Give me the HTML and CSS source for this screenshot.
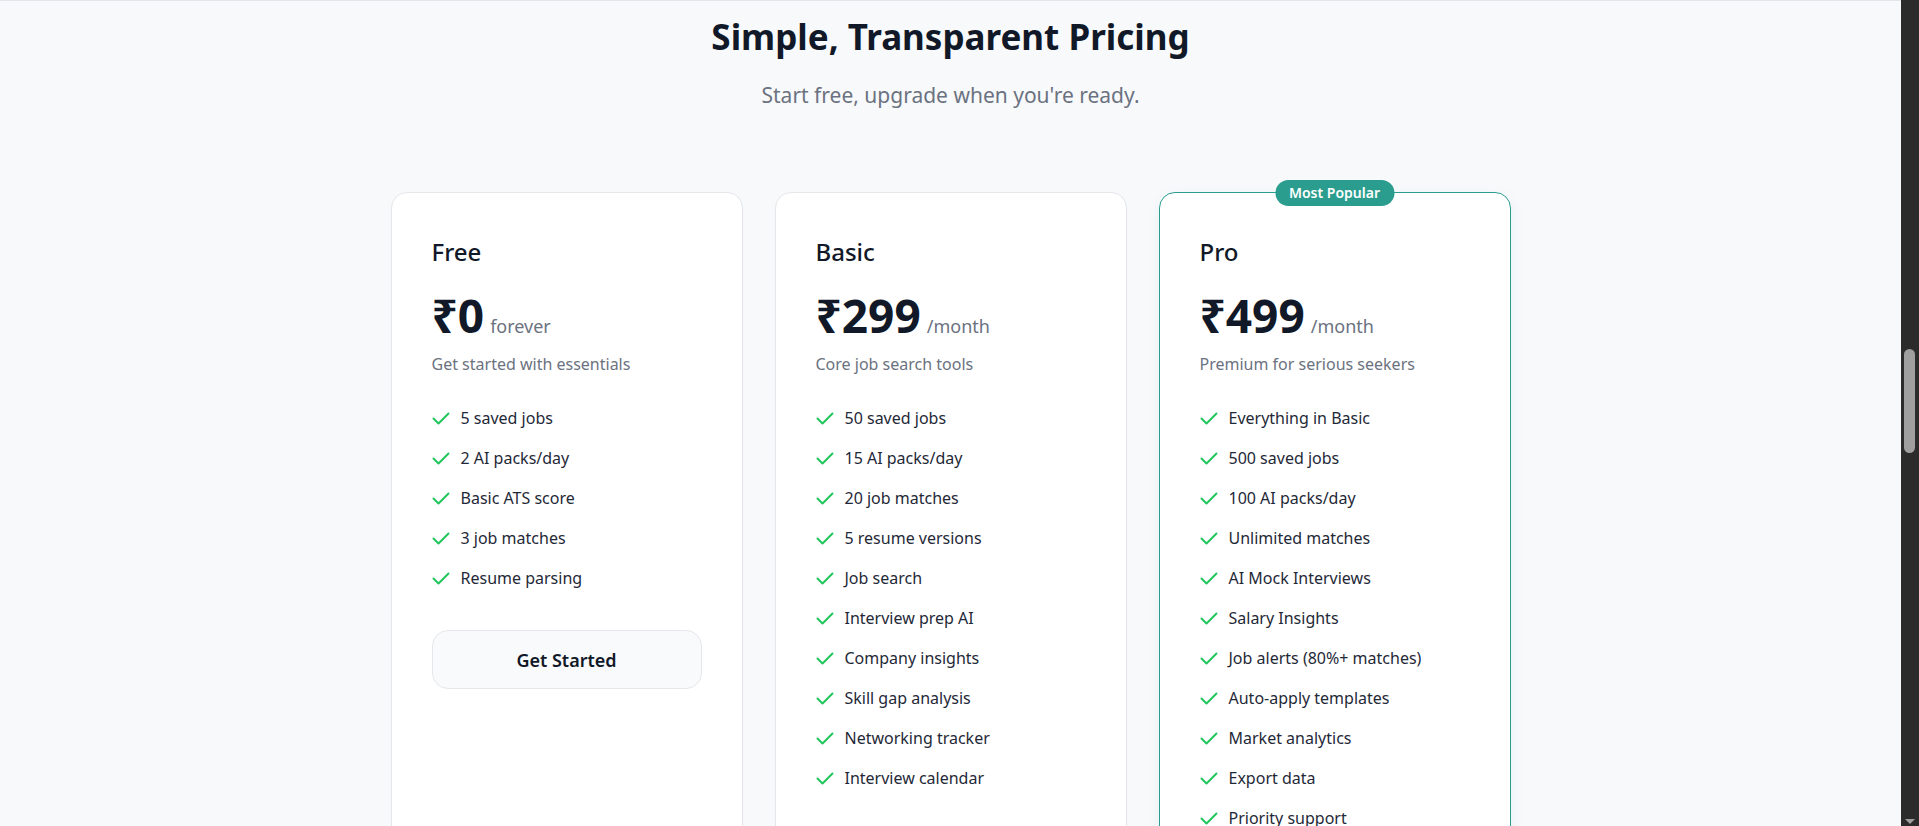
FILE: index.html
```html
<!DOCTYPE html>
<html lang="en">
<head>
    <meta charset="UTF-8">
    <meta name="viewport" content="width=device-width, initial-scale=1.0">
    <title>Pricing</title>
    <link rel="stylesheet" href="styles.css">
</head>
<body>
<div class="topline"></div>

<section class="pricing">
    <h2 class="pricing-title">Simple, Transparent Pricing</h2>
    <p class="pricing-sub">Start free, upgrade when you're ready.</p>

    <div class="plans">
        <div class="plan">
            <h3 class="plan-name">Free</h3>
            <div class="plan-price"><span class="amount">₹0</span><span class="period">forever</span></div>
            <p class="plan-desc">Get started with essentials</p>
            <ul class="features">
                <li><svg class="check" viewBox="0 0 18 18"><path d="M1.5 9.5l5 5 10-10"/></svg>5 saved jobs</li>
                <li><svg class="check" viewBox="0 0 18 18"><path d="M1.5 9.5l5 5 10-10"/></svg>2 AI packs/day</li>
                <li><svg class="check" viewBox="0 0 18 18"><path d="M1.5 9.5l5 5 10-10"/></svg>Basic ATS score</li>
                <li><svg class="check" viewBox="0 0 18 18"><path d="M1.5 9.5l5 5 10-10"/></svg>3 job matches</li>
                <li><svg class="check" viewBox="0 0 18 18"><path d="M1.5 9.5l5 5 10-10"/></svg>Resume parsing</li>
            </ul>
            <button class="plan-btn">Get Started</button>
        </div>

        <div class="plan">
            <h3 class="plan-name">Basic</h3>
            <div class="plan-price"><span class="amount">₹299</span><span class="period">/month</span></div>
            <p class="plan-desc">Core job search tools</p>
            <ul class="features">
                <li><svg class="check" viewBox="0 0 18 18"><path d="M1.5 9.5l5 5 10-10"/></svg>50 saved jobs</li>
                <li><svg class="check" viewBox="0 0 18 18"><path d="M1.5 9.5l5 5 10-10"/></svg>15 AI packs/day</li>
                <li><svg class="check" viewBox="0 0 18 18"><path d="M1.5 9.5l5 5 10-10"/></svg>20 job matches</li>
                <li><svg class="check" viewBox="0 0 18 18"><path d="M1.5 9.5l5 5 10-10"/></svg>5 resume versions</li>
                <li><svg class="check" viewBox="0 0 18 18"><path d="M1.5 9.5l5 5 10-10"/></svg>Job search</li>
                <li><svg class="check" viewBox="0 0 18 18"><path d="M1.5 9.5l5 5 10-10"/></svg>Interview prep AI</li>
                <li><svg class="check" viewBox="0 0 18 18"><path d="M1.5 9.5l5 5 10-10"/></svg>Company insights</li>
                <li><svg class="check" viewBox="0 0 18 18"><path d="M1.5 9.5l5 5 10-10"/></svg>Skill gap analysis</li>
                <li><svg class="check" viewBox="0 0 18 18"><path d="M1.5 9.5l5 5 10-10"/></svg>Networking tracker</li>
                <li><svg class="check" viewBox="0 0 18 18"><path d="M1.5 9.5l5 5 10-10"/></svg>Interview calendar</li>
            </ul>
            <button class="plan-btn">Upgrade to Basic</button>
        </div>

        <div class="plan plan-popular">
            <span class="badge">Most Popular</span>
            <h3 class="plan-name">Pro</h3>
            <div class="plan-price"><span class="amount">₹499</span><span class="period">/month</span></div>
            <p class="plan-desc">Premium for serious seekers</p>
            <ul class="features">
                <li><svg class="check" viewBox="0 0 18 18"><path d="M1.5 9.5l5 5 10-10"/></svg>Everything in Basic</li>
                <li><svg class="check" viewBox="0 0 18 18"><path d="M1.5 9.5l5 5 10-10"/></svg>500 saved jobs</li>
                <li><svg class="check" viewBox="0 0 18 18"><path d="M1.5 9.5l5 5 10-10"/></svg>100 AI packs/day</li>
                <li><svg class="check" viewBox="0 0 18 18"><path d="M1.5 9.5l5 5 10-10"/></svg>Unlimited matches</li>
                <li><svg class="check" viewBox="0 0 18 18"><path d="M1.5 9.5l5 5 10-10"/></svg>AI Mock Interviews</li>
                <li><svg class="check" viewBox="0 0 18 18"><path d="M1.5 9.5l5 5 10-10"/></svg>Salary Insights</li>
                <li><svg class="check" viewBox="0 0 18 18"><path d="M1.5 9.5l5 5 10-10"/></svg>Job alerts (80%+ matches)</li>
                <li><svg class="check" viewBox="0 0 18 18"><path d="M1.5 9.5l5 5 10-10"/></svg>Auto-apply templates</li>
                <li><svg class="check" viewBox="0 0 18 18"><path d="M1.5 9.5l5 5 10-10"/></svg>Market analytics</li>
                <li><svg class="check" viewBox="0 0 18 18"><path d="M1.5 9.5l5 5 10-10"/></svg>Export data</li>
                <li><svg class="check" viewBox="0 0 18 18"><path d="M1.5 9.5l5 5 10-10"/></svg>Priority support</li>
            </ul>
            <button class="plan-btn plan-btn-primary">Upgrade to Pro</button>
        </div>
    </div>
</section>

<div class="scrollbar">
    <div class="scroll-thumb"></div>
    <div class="scroll-arrow"></div>
</div>
</body>
</html>
```

FILE: styles.css
```css
html {
    overflow: hidden;
}
body {
    font-family: "Noto Sans", sans-serif;
    margin: 0;
    padding: 0 18px 0 0;
    background-color: #f8f9fb;
    color: #111827;
}
.topline {
    height: 1px;
    background: #e3e5e9;
}
.pricing {
    padding-top: 16px;
    text-align: center;
}
.pricing-title {
    margin: 0;
    font-size: 35px;
    line-height: 40px;
    font-weight: 700;
    color: #111827;
}
.pricing-sub {
    margin: 24px 0 0;
    font-size: 21px;
    line-height: 28px;
    color: #6b7280;
}
.plans {
    display: grid;
    grid-template-columns: repeat(3, 1fr);
    gap: 32px;
    width: 1120px;
    margin: 83px auto 0;
    text-align: left;
}
.plan {
    position: relative;
    background: white;
    border: 1px solid #e5e7eb;
    border-radius: 16px;
    padding: 43px 40px 40px;
    box-shadow: 0 1px 2px rgba(0, 0, 0, 0.03);
}
.plan-popular {
    border-color: #2a9d8f;
    box-shadow: 0 4px 14px rgba(42, 157, 143, 0.08);
}
.badge {
    position: absolute;
    top: -13px;
    left: 50%;
    transform: translateX(-50%);
    background: #2a9d8f;
    color: white;
    font-size: 14px;
    line-height: 18px;
    font-weight: 600;
    padding: 4px 14px;
    border-radius: 999px;
    white-space: nowrap;
}
.plan-name {
    margin: 0;
    font-size: 24px;
    line-height: 32px;
    font-weight: 500;
    color: #111827;
}
.plan-price {
    display: flex;
    align-items: baseline;
    gap: 6px;
    margin-top: 24px;
    line-height: 1;
}
.amount {
    font-size: 46px;
    font-weight: 700;
    color: #111827;
}
.period {
    font-size: 18px;
    color: #6b7280;
}
.plan-desc {
    margin: 14px 0 0;
    font-size: 16px;
    line-height: 24px;
    color: #6b7280;
}
.features {
    list-style: none;
    margin: 30px 0 0;
    padding: 0;
    display: flex;
    flex-direction: column;
    gap: 16px;
}
.features li {
    display: flex;
    align-items: center;
    gap: 11px;
    font-size: 16px;
    line-height: 24px;
    color: #1f2937;
}
.check {
    width: 18px;
    height: 18px;
    flex-shrink: 0;
    fill: none;
    stroke: #22c55e;
    stroke-width: 2;
    stroke-linecap: round;
    stroke-linejoin: round;
}
.plan-btn {
    display: block;
    width: 100%;
    height: 59px;
    margin-top: 40px;
    background: #f9fafb;
    border: 1px solid #e5e7eb;
    border-radius: 16px;
    font-family: inherit;
    font-size: 18px;
    font-weight: 600;
    color: #111827;
    cursor: pointer;
}
.plan-btn-primary {
    background: #2a9d8f;
    border-color: #2a9d8f;
    color: white;
}
.scrollbar {
    position: fixed;
    top: 0;
    right: 0;
    width: 18px;
    height: 100%;
    background: #2b2b2b;
}
.scroll-thumb {
    position: absolute;
    top: 349px;
    left: 3px;
    width: 11px;
    height: 104px;
    background: #9f9f9f;
    border-radius: 6px;
}
.scroll-arrow {
    position: absolute;
    bottom: 2px;
    left: 4px;
    border-left: 5px solid transparent;
    border-right: 5px solid transparent;
    border-top: 5px solid #9f9f9f;
}
```
